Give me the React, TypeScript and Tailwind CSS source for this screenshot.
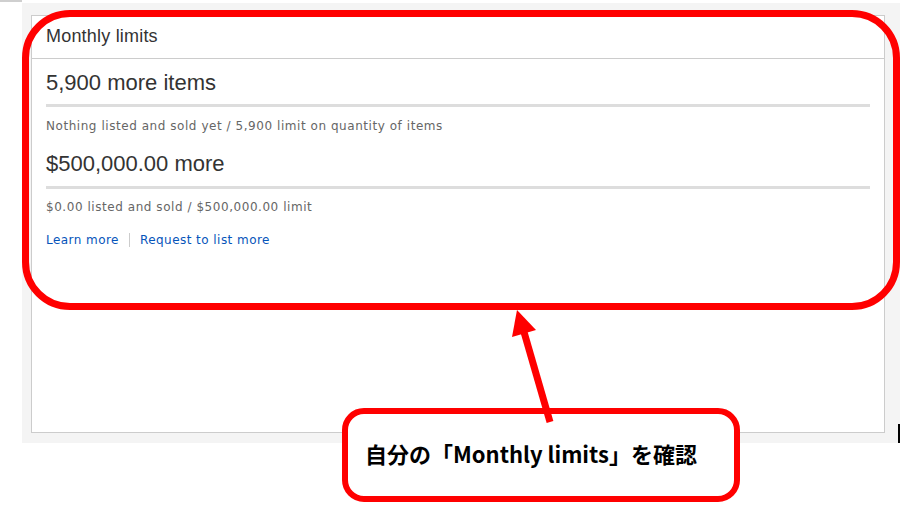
import React from "react";

export default function App() {
  const sans = { fontFamily: '"Liberation Sans", Arial, sans-serif' };
  const small = { fontFamily: '"DejaVu Sans", Verdana, sans-serif' };
  return (
    <div className="relative w-[900px] h-[519px] bg-white overflow-hidden">
      <div className="h-[2px] w-[22px] bg-[#cfcfcf]" />
      <div className="mt-[1px] ml-[22px] w-[878px] h-[440px] bg-[#f4f4f4] pl-[9px] pt-[12px]">
        <div className="w-[854px] h-[418px] bg-white border border-[#cccccc]">
          <div className="h-[43px] border-b border-[#cccccc] px-[14px] pt-[9px]">
            <div className="text-[18px] leading-[22px] tracking-[0.2px] text-[#333333]" style={sans}>
              Monthly limits
            </div>
          </div>
          <div className="px-[14px]">
            <div className="mt-[10px] text-[22px] leading-[28px] text-[#333333]" style={sans}>
              5,900 more items
            </div>
            <div className="mt-[7px] h-[3px] bg-[#dddddd]" />
            <div className="mt-[11px] text-[12px] leading-[16px] tracking-[0.55px] text-[#666666]" style={small}>
              Nothing listed and sold yet / 5,900 limit on quantity of items
            </div>
            <div className="mt-[16px] text-[22px] leading-[28px] text-[#333333]" style={sans}>
              $500,000.00 more
            </div>
            <div className="mt-[8px] h-[3px] bg-[#dddddd]" />
            <div className="mt-[10px] text-[12px] leading-[16px] tracking-[0.55px] text-[#666666]" style={small}>
              $0.00 listed and sold / $500,000.00 limit
            </div>
            <div className="mt-[17px] flex items-center text-[12px] leading-[16px] tracking-[0.45px] text-[#0654ba]" style={small}>
              <span>Learn more</span>
              <span className="ml-[10px] mr-[10px] h-[14px] w-px bg-[#cccccc]" />
              <span>Request to list more</span>
            </div>
          </div>
        </div>
      </div>

      <div className="absolute left-[898px] top-[424px] h-[19px] w-[2px] bg-black" />

      <div className="absolute left-[22px] top-[10px] w-[878px] h-[300px] border-[7px] border-[#ff0000] rounded-[48px]" />

      <div className="absolute left-[342px] top-[408px] w-[398px] h-[94px] border-[6px] border-[#ff0000] rounded-[22px] bg-white pl-[17px] pt-[23px]">
        <div
          className="text-[22px] leading-[32px] font-bold text-black whitespace-nowrap"
          style={{ fontFamily: '"Noto Sans CJK JP", "Noto Sans", sans-serif' }}
        >
          自分の「Monthly limits」を確認
        </div>
      </div>

      <svg className="absolute left-0 top-0" width="900" height="519" viewBox="0 0 900 519">
        <line x1="550" y1="422" x2="524" y2="332" stroke="#ff0000" strokeWidth="7" />
        <polygon points="517,310 536,330 512,337" fill="#ff0000" />
      </svg>
    </div>
  );
}
